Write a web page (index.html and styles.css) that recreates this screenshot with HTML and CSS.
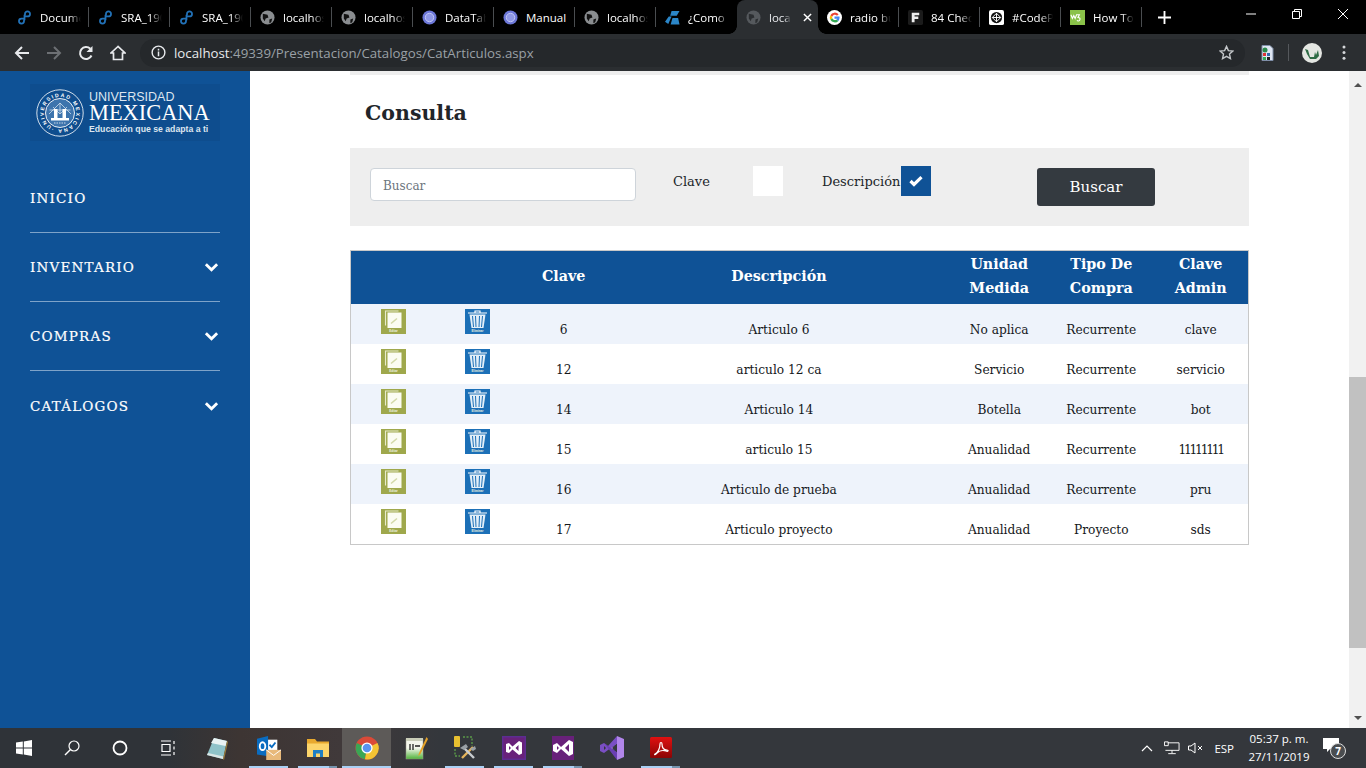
FILE: index.html
```html
<!DOCTYPE html>
<html lang="es">
<head>
<meta charset="utf-8">
<title>CatArticulos</title>
<link rel="stylesheet" href="styles.css">
</head>
<body>
<div class="tabstrip">
  <div class="tab"><svg class="fav"><use href="#f-link"/></svg><span class="tab-t">Document</span></div>
  <div class="tab"><svg class="fav"><use href="#f-link"/></svg><span class="tab-t">SRA_190</span></div>
  <div class="tab"><svg class="fav"><use href="#f-link"/></svg><span class="tab-t">SRA_190</span></div>
  <div class="tab"><svg class="fav"><use href="#f-globe"/></svg><span class="tab-t">localhost</span></div>
  <div class="tab"><svg class="fav"><use href="#f-globe"/></svg><span class="tab-t">localhost</span></div>
  <div class="tab"><svg class="fav"><use href="#f-dt"/></svg><span class="tab-t">DataTables</span></div>
  <div class="tab"><svg class="fav"><use href="#f-dt"/></svg><span class="tab-t wide">Manual</span></div>
  <div class="tab"><svg class="fav"><use href="#f-globe"/></svg><span class="tab-t">localhost</span></div>
  <div class="tab tab-noline"><svg class="fav" viewBox="0 0 16 16"><path d="M7 1h8.500l-3 5H5.500zM0 12.500L4 7h3l-3.500 8zM8 8.500h6l1.500 7H6z" fill="#2b86c8"/></svg><span class="tab-t">¿Como</span></div>
  <div class="tab tab-active"><svg class="fav" viewBox="0 0 16 16"><circle cx="8" cy="8" r="7.500" fill="#55595d"/><path d="M3 4l5 1 1 3-3 1-1 3-2-3zM10 10l3-1-1 4-2 1z" fill="#2b2e31"/></svg><span class="tab-t short">localhost</span><svg class="tab-x" viewBox="0 0 10 10"><path d="M1 1l8 8M9 1l-8 8" stroke="#fff" stroke-width="1.600"/></svg></div>
  <div class="tab"><svg class="fav" viewBox="0 0 16 16"><circle cx="8" cy="8" r="8" fill="#fff"/><path d="M12.400 4.600A5.400 5.400 0 0 0 3.600 5.600l2 1.500A3 3 0 0 1 10.600 6z" fill="#ea4335"/><path d="M3.600 5.600a5.400 5.400 0 0 0 0 4.800l2-1.500a3 3 0 0 1 0-1.800z" fill="#fbbc05"/><path d="M3.600 10.400a5.400 5.400 0 0 0 8.600 1.200l-2-1.500a3 3 0 0 1-4.600-1.200z" fill="#34a853"/><path d="M13.400 8c0-.4 0-.7-.1-1H8v2.200h3a2.600 2.600 0 0 1-.8 1l2 1.400A5.400 5.400 0 0 0 13.400 8z" fill="#4285f4"/></svg><span class="tab-t">radio butt</span></div>
  <div class="tab"><svg class="fav" viewBox="0 0 16 16"><rect width="16" height="16" rx="2" fill="#1b1b1b"/><path d="M4 3h8v2.500H7V7h4v2.500H7V13H4z" fill="#eee"/></svg><span class="tab-t">84 Check</span></div>
  <div class="tab"><svg class="fav" viewBox="0 0 16 16"><rect width="16" height="16" rx="2" fill="#fff"/><circle cx="8" cy="8" r="6" fill="#111"/><path d="M8 3.500L12.500 8 8 12.500 3.500 8zM3.500 8h9M8 3.500v9" fill="none" stroke="#fff" stroke-width="1"/></svg><span class="tab-t">#CodePen</span></div>
  <div class="tab"><svg class="fav" viewBox="0 0 16 16"><rect width="16" height="16" fill="#8ac249"/><path d="M1 5l1.500 4L4 6l1.500 3L7 5h3l-1.500 3c2 0 2.500 1 2 2.500S8 12 7.500 11" fill="none" stroke="#fff" stroke-width="1.200"/></svg><span class="tab-t">How To C</span></div>
  <svg class="newtab" viewBox="0 0 14 14"><path d="M7 0v14M0 7h14" stroke="#fff" stroke-width="2"/></svg>
  <div class="winctl">
    <svg viewBox="0 0 12 12"><path d="M1 6h10" stroke="#fff"/></svg>
    <svg viewBox="0 0 12 12"><path d="M1.500 3.500h7v7h-7zM3.500 3.500v-2h7v7h-2" fill="none" stroke="#fff"/></svg>
    <svg viewBox="0 0 12 12"><path d="M1 1l10 10M11 1L1 11" stroke="#fff"/></svg>
  </div>
</div>

<div class="toolbar">
  <svg class="tb-btn" viewBox="0 0 16 16"><path d="M15 8H2M8 2L2 8l6 6" fill="none" stroke="#e8eaed" stroke-width="2"/></svg>
  <svg class="tb-btn" viewBox="0 0 16 16"><path d="M1 8h13M8 2l6 6-6 6" fill="none" stroke="#6d7074" stroke-width="2"/></svg>
  <svg class="tb-btn" viewBox="0 0 16 16"><path d="M13.500 10.500A6 6 0 1 1 12.300 3.800" fill="none" stroke="#e8eaed" stroke-width="2"/><path d="M14.500 1v6h-6z" fill="#e8eaed"/></svg>
  <svg class="tb-btn" viewBox="0 0 16 16"><path d="M8 1.500L1 8h2.500v6.500h9V8H15z" fill="none" stroke="#e8eaed" stroke-width="1.700"/></svg>
  <div class="omnibox">
    <svg class="info" viewBox="0 0 16 16"><circle cx="8" cy="8" r="6.800" fill="none" stroke="#e8eaed" stroke-width="1.500"/><path d="M8 7v5M8 4v1.800" stroke="#e8eaed" stroke-width="1.600"/></svg>
    <span class="url"><span class="url-host">localhost</span>:49339/Presentacion/Catalogos/CatArticulos.aspx</span>
    <svg class="star" viewBox="0 0 16 16"><path d="M8 1.500l2 4.500 4.800.5-3.600 3.200 1 4.800L8 12.100l-4.200 2.400 1-4.800L1.200 6.500 6 6z" fill="none" stroke="#c4c7ca" stroke-width="1.500"/></svg>
  </div>
  <svg class="ext" viewBox="0 0 16 16"><path d="M3 .5h8l3 3v12H3z" fill="#dfe6f2" stroke="#7f8ea8"/><rect x="4" y="8" width="3" height="3" fill="#d33"/><rect x="8" y="8" width="3" height="3" fill="#36a"/><rect x="4" y="12" width="3" height="3" fill="#3a5"/><rect x="8" y="12" width="3" height="3" fill="#222"/><circle cx="6" cy="5" r="2.500" fill="#2a8a4a"/></svg>
  <span class="tb-sep"></span>
  <svg class="avatar" viewBox="0 0 20 20"><circle cx="10" cy="10" r="10" fill="#e4e6e2"/><path d="M3 6l3 1 2 7h4l1-5 1 3 2-5 1 6-3 3H8L5 11z" fill="#2e6b45"/></svg>
  <svg class="menu" viewBox="0 0 4 16"><circle cx="2" cy="2" r="1.600" fill="#d5d7da"/><circle cx="2" cy="8" r="1.600" fill="#d5d7da"/><circle cx="2" cy="14" r="1.600" fill="#d5d7da"/></svg>
</div>

<div class="page">
  <aside class="sidebar">
    <div class="logo">
      <svg class="seal" viewBox="0 0 48 48">
        <circle cx="24" cy="24" r="23.200" fill="none" stroke="#e8eef5" stroke-width=".9"/>
        <circle cx="24" cy="24" r="14.500" fill="#3d74ad" stroke="#fff" stroke-width=".9"/>
        <defs><path id="ring" d="M7.800 24a16.200 16.200 0 1 1 32.400 0a16.200 16.200 0 1 1-32.400 0"/></defs>
        <text class="seal-t" transform="rotate(-58 24 24)"><textPath href="#ring" textLength="100" lengthAdjust="spacing">UNIVERSIDAD MEXICANA ·</textPath></text>
        <path d="M13 25L24 14l11 11M17 18l7 7 7-7M24 14v11M13.500 21H34.500" fill="none" stroke="#cfdeee" stroke-width=".8"/>
        <path d="M18 20h3.500v9H18zM26.500 20H30v9h-3.500zM15 29h18v2.500H15z" fill="#fff"/>
        <path d="M18 34h12" stroke="#dbe6f1" stroke-width=".9" stroke-dasharray="1.500 1"/>
      </svg>
      <div class="logo-text">
        <span class="logo-a">UNIVERSIDAD</span>
        <span class="logo-b">MEXICANA</span>
        <span class="logo-c">Educación que se adapta a ti</span>
      </div>
    </div>
    <nav class="nav">
      <a class="nav-item">INICIO</a>
      <a class="nav-item">INVENTARIO<svg class="chev" viewBox="0 0 16 10"><path d="M2 2l6 6 6-6" fill="none" stroke="#fff" stroke-width="3"/></svg></a>
      <a class="nav-item">COMPRAS<svg class="chev" viewBox="0 0 16 10"><path d="M2 2l6 6 6-6" fill="none" stroke="#fff" stroke-width="3"/></svg></a>
      <a class="nav-item last">CATÁLOGOS<svg class="chev" viewBox="0 0 16 10"><path d="M2 2l6 6 6-6" fill="none" stroke="#fff" stroke-width="3"/></svg></a>
    </nav>
  </aside>

  <main class="main">
    <div class="strip"></div>
    <h1 class="title">Consulta</h1>
    <form class="search">
      <input class="search-input" type="text" placeholder="Buscar">
      <span class="lbl lbl-clave">Clave</span>
      <span class="box"></span>
      <span class="lbl lbl-desc">Descripción</span>
      <span class="box box-on"><svg viewBox="0 0 14 12"><path d="M1.500 6l3.500 3.500L12.500 2.200" fill="none" stroke="#fff" stroke-width="3.200"/></svg></span>
      <button class="btn" type="button">Buscar</button>
    </form>

    <table class="grid">
      <colgroup><col class="c1"><col class="c1"><col class="c3"><col class="c4"><col class="c5"><col class="c6"><col class="c7"></colgroup>
      <thead>
        <tr><th></th><th></th><th>Clave</th><th>Descripción</th><th>Unidad Medida</th><th>Tipo De Compra</th><th>Clave Admin</th></tr>
      </thead>
      <tbody>
        <tr><td class="ic"><svg class="ico"><use href="#edit"/></svg></td><td class="ic"><svg class="ico"><use href="#del"/></svg></td><td>6</td><td>Articulo 6</td><td>No aplica</td><td>Recurrente</td><td>clave</td></tr>
        <tr><td class="ic"><svg class="ico"><use href="#edit"/></svg></td><td class="ic"><svg class="ico"><use href="#del"/></svg></td><td>12</td><td>articulo 12 ca</td><td>Servicio</td><td>Recurrente</td><td>servicio</td></tr>
        <tr><td class="ic"><svg class="ico"><use href="#edit"/></svg></td><td class="ic"><svg class="ico"><use href="#del"/></svg></td><td>14</td><td>Articulo 14</td><td>Botella</td><td>Recurrente</td><td>bot</td></tr>
        <tr><td class="ic"><svg class="ico"><use href="#edit"/></svg></td><td class="ic"><svg class="ico"><use href="#del"/></svg></td><td>15</td><td>articulo 15</td><td>Anualidad</td><td>Recurrente</td><td class="ones">11111111</td></tr>
        <tr><td class="ic"><svg class="ico"><use href="#edit"/></svg></td><td class="ic"><svg class="ico"><use href="#del"/></svg></td><td>16</td><td>Articulo de prueba</td><td>Anualidad</td><td>Recurrente</td><td>pru</td></tr>
        <tr class="row-last"><td class="ic"><svg class="ico"><use href="#edit"/></svg></td><td class="ic"><svg class="ico"><use href="#del"/></svg></td><td>17</td><td>Articulo proyecto</td><td>Anualidad</td><td>Proyecto</td><td>sds</td></tr>
      </tbody>
    </table>
  </main>

  <div class="scrollbar">
    <span class="arrow-up"></span>
    <div class="track"><div class="thumb"></div></div>
    <span class="arrow-down"></span>
  </div>
</div>

<div class="taskbar">
  <svg class="tk" viewBox="0 0 16 16"><path d="M0 2.500L6.800 1.500v6H0zM7.800 1.400L16 0v7.500H7.800zM0 8.500h6.800v6L0 13.500zM7.800 8.500H16V16l-8.200-1.400z" fill="#fff"/></svg>
  <svg class="tk" viewBox="0 0 16 16"><circle cx="10" cy="6" r="5" fill="none" stroke="#fff" stroke-width="1.200"/><path d="M6.500 9.500L1 15" stroke="#fff" stroke-width="1.400"/></svg>
  <svg class="tk" viewBox="0 0 16 16"><circle cx="8" cy="8" r="6.500" fill="none" stroke="#fff" stroke-width="1.800"/></svg>
  <svg class="tk" viewBox="0 0 16 16"><path d="M1 1h10M1 15h10M2 4.500h8v7H2zM14 1v3M14 6.500v3M14 12v3" fill="none" stroke="#fff" stroke-width="1.200"/></svg>
  <svg class="tk app app-first" viewBox="0 0 24 24"><path d="M9 2l13 3-4 18L2 19z" fill="#8fc3c9"/><path d="M9 2l13 3-1.500 5L6 7z" fill="#e9f3f3"/><path d="M2 19l16 4 .6-2.500L3 17z" fill="#dbe6e6"/><path d="M22 5l1 1-4 18-1-1z" fill="#9a7a3a"/></svg>
  <div class="tkw on"><svg class="tk" viewBox="0 0 26 26"><rect x="9" y="4" width="13" height="12" fill="#fff"/><path d="M13.500 9.500l2.500 2.500 4-5" fill="none" stroke="#0a6cc0" stroke-width="2"/><path d="M0 3l12-3v22L0 20z" fill="#0a6cc0"/><ellipse cx="6" cy="11" rx="3" ry="4.200" fill="none" stroke="#fff" stroke-width="2"/><rect x="10" y="15" width="16" height="11" fill="#e8b97a"/><path d="M10 15l8 6 8-6" fill="none" stroke="#fff"/></svg></div>
  <div class="tkw on split"><svg class="tk" viewBox="0 0 24 24"><path d="M1 3h8l2 2.500h12V21H1z" fill="#e8a92e"/><path d="M1 7.500h22V21H1z" fill="#fcd56b"/><path d="M7 21v-7h10v7h-3v-3.500h-4V21z" fill="#1f7fc4"/></svg></div>
  <div class="tkw active"><svg class="tk" viewBox="0 0 24 24"><circle cx="12" cy="12" r="11.500" fill="#da4a38"/><path d="M12 12L1.800 7A11.500 11.500 0 0 0 10 23.300z" fill="#3aa655"/><path d="M12 12l-2 11.300A11.500 11.500 0 0 0 22.500 7z" fill="#f3c433"/><circle cx="12" cy="12" r="5.600" fill="#fff"/><circle cx="12" cy="12" r="4.300" fill="#5a94ef"/></svg></div>
  <svg class="tk app" viewBox="0 0 24 24"><defs><linearGradient id="note" x1="0" y1="0" x2="0" y2="1"><stop offset=".45" stop-color="#f4f6ec"/><stop offset="1" stop-color="#4fb33a"/></linearGradient></defs><rect x="2" y="3" width="17" height="20" fill="url(#note)" stroke="#9a9a8a" stroke-width=".5"/><path d="M2 2h17v3H2z" fill="#c9cdb8"/><path d="M6 8v6M9 8v6M11 10h5" stroke="#222" stroke-width="1.300"/><path d="M22.500 1L15 17l-1 3 2.500-2L24 3z" fill="#e5a228"/></svg>
  <div class="tkw on"><svg class="tk" viewBox="0 0 24 24"><rect x="1" y="0" width="6" height="11" rx="1" fill="#e8c030"/><path d="M10 1h9v9M2 13v7h5" fill="none" stroke="#5a9a48" stroke-width="1.400" stroke-dasharray="2 1.500"/><path d="M9 22L20 11" stroke="#e5b35a" stroke-width="2.400"/><path d="M10 11l11 11" stroke="#c8ccd0" stroke-width="2.400"/><path d="M7 12l6-4 2 3-4 3zM17 13l5-3 1 3-3 2z" fill="#9aa0a6"/></svg></div>
  <div class="tkw on"><svg class="tk" viewBox="0 0 24 24"><rect width="24" height="24" fill="#5c2d91"/><rect x="1.500" y="1.500" width="21" height="21" fill="#68217a"/><path d="M4 8l3-1 3.500 3.500L17 5l3 1.500v11L17 19l-6.500-5.500L7 17l-3-1zM7 10v4l2-2zM16.500 9l-3 3 3 3z" fill="#fff" fill-rule="evenodd"/></svg></div>
  <div class="tkw on split"><svg class="tk" viewBox="0 0 24 24"><rect x="1" y="0" width="22" height="24" fill="#68217a"/><path d="M2 9l4-2 4 4 8-7 4 2v12l-4 2-8-7-4 4-4-2zM6 10v4l2-2zM18 8l-4 4 4 4z" fill="#fff" fill-rule="evenodd"/></svg></div>
  <svg class="tk app" viewBox="0 0 24 24"><path d="M17 0l7 3v18l-7 3V14L7 12 17 10z" fill="#b186ea"/><path d="M17 0v8l-9 6-4 3-4-2V9l4-2 4 3z" fill="#7a4fc4"/><path d="M17 24v-8l-9-6-4-3 13 17z" fill="#6a3fb4"/><path d="M4 10v4l2-2z" fill="#34373c"/><path d="M17 8v8l-5-4z" fill="#34373c"/></svg>
  <div class="tkw on split"><svg class="tk" viewBox="0 0 24 24"><defs><linearGradient id="pdf" x1="0" y1="0" x2="0" y2="1"><stop offset="0" stop-color="#e01010"/><stop offset="1" stop-color="#8a0505"/></linearGradient></defs><rect x="1" y="1" width="22" height="21" rx="1.500" fill="url(#pdf)"/><path d="M6 18c3-1 5-6 5-10 0-2 2-2 2 0 0 4 2 6 5 6 2 0 1 2-1 1-3-1-7 0-9 2-2 2-3 2-2 1z" fill="none" stroke="#fff" stroke-width="1.200"/></svg></div>
  <div class="tray">
    <svg class="tr-chev" viewBox="0 0 12 7"><path d="M1 6l5-5 5 5" fill="none" stroke="#fff" stroke-width="1.200"/></svg>
    <svg class="tr-net" viewBox="0 0 17 14"><path d="M4 1.500h12v8H1.500M8.500 9.500v3M4.500 13h8M.5.500h4v4h-4z" fill="none" stroke="#fff"/></svg>
    <svg class="tr-vol" viewBox="0 0 15 12"><path d="M.5 4v4h2.500L7 11V1L3 4zM10 4l4 4M14 4l-4 4" fill="none" stroke="#fff"/></svg>
    <span class="tr-lang">ESP</span>
    <span class="tr-clock"><span>05:37 p. m.</span><span>27/11/2019</span></span>
    <span class="tr-notif"><svg viewBox="0 0 16 14"><path d="M0 0h16v11H7l-3 3v-3H0z" fill="#fff"/></svg><span class="badge">7</span></span>
  </div>
</div>

<svg class="defs" aria-hidden="true">
  <symbol id="f-link" viewBox="0 0 16 16">
    <path d="M8.500 5.500V4.200a2.700 2.700 0 1 1 2.700 2.700H7.500M7.500 10.500v1.300a2.700 2.700 0 1 1-2.700-2.700H8.500M8 5v6" fill="none" stroke="#2272b8" stroke-width="1.900"/>
  </symbol>
  <symbol id="f-globe" viewBox="0 0 16 16">
    <circle cx="8" cy="8" r="7.500" fill="#8a8d90"/><path d="M3 4l5 1 1 3-3 1-1 3-2-3zM10 10l3-1-1 4-2 1z" fill="#111"/>
  </symbol>
  <symbol id="f-dt" viewBox="0 0 16 16">
    <circle cx="8" cy="8" r="7.500" fill="#6d78d8"/><circle cx="8" cy="8" r="4.500" fill="#8f98e6" stroke="#c5caf4"/>
  </symbol>
  <symbol id="edit" viewBox="0 0 25 25">
    <rect width="25" height="25" fill="#9fa84c"/>
    <path d="M4.500 16.500V2h13" fill="none" stroke="#e7ebc9" stroke-width="1.100"/>
    <rect x="6.500" y="3.500" width="14" height="15.500" fill="#fbfcf2"/>
    <path d="M10 14.500l6-5" stroke="#d3d9a8" stroke-width="1.600"/>
    <text class="mini" x="12.500" y="23">Editar</text>
  </symbol>
  <symbol id="del" viewBox="0 0 25 25">
    <rect width="25" height="25" fill="#1c70b7"/>
    <path d="M3 4h19M10 3.500V2h5v1.500" fill="none" stroke="#fff" stroke-width="1.200"/>
    <path d="M4.500 5.500h16L18.500 19h-12z" fill="#e3eff8"/>
    <path d="M7.500 7l1 11M10.500 7l.5 11M14.500 7l-.5 11M17.500 7l-1 11" stroke="#1c70b7" stroke-width="1"/>
    <text class="mini" x="12.500" y="23">Eliminar</text>
  </symbol>
</svg>
</body>
</html>
```

FILE: styles.css
```css
* { box-sizing: border-box; }
html, body { margin: 0; height: 100%; overflow: hidden; }
body {
  display: flex;
  flex-direction: column;
  width: 1366px;
  height: 768px;
  background: #fff;
  font-family: "DejaVu Serif", serif;
}
.defs { width: 0; height: 0; display: block; overflow: hidden; flex: none; }

/* tab strip */
.tabstrip {
  flex: none;
  height: 34px;
  background: #000;
  display: flex;
  align-items: stretch;
  padding-left: 8px;
  font-family: "Open Sans", sans-serif;
  font-size: 11.500px;
  color: #fff;
}
.tab {
  width: 81px;
  display: flex;
  align-items: center;
  gap: 8px;
  padding-left: 9px;
  position: relative;
}
.tab::after {
  content: "";
  position: absolute;
  right: 0;
  top: 7px;
  height: 20px;
  width: 1px;
  background: #4a4d50;
}
.tab-noline::after { display: none; }
.fav { width: 15px; height: 15px; flex: none; }
.tab-t {
  width: 41px;
  overflow: hidden;
  white-space: nowrap;
  -webkit-mask-image: linear-gradient(to right, #000 70%, transparent 100%);
  mask-image: linear-gradient(to right, #000 70%, transparent 100%);
}
.tab-t.wide { width: 46px; -webkit-mask-image: none; mask-image: none; }
.tab-t.short { width: 22px; }
.tab-active {
  background: #2b2e31;
  border-radius: 8px 8px 0 0;
  color: #e8eaed;
}
.tab-active::before,
.tab-active::after {
  content: "";
  display: block;
  position: absolute;
  top: auto;
  bottom: 0;
  width: 8px;
  height: 8px;
}
.tab-active::before { left: -8px; right: auto; background: radial-gradient(circle at 0 0, #000 7.500px, #2b2e31 8px); }
.tab-active::after { right: -8px; background: radial-gradient(circle at 100% 0, #000 7.500px, #2b2e31 8px); }
.tab-x { width: 9px; height: 9px; flex: none; margin-left: 4px; }
.newtab { width: 13px; height: 13px; margin: 11px 0 0 16px; }
.winctl {
  margin-left: auto;
  display: flex;
  gap: 34px;
  padding: 8px 17px 0 0;
}
.winctl svg { width: 12px; height: 12px; }

/* toolbar */
.toolbar {
  flex: none;
  height: 37px;
  background: #2b2e31;
  display: flex;
  align-items: center;
  padding-left: 14px;
}
.tb-btn { width: 16px; height: 16px; margin-right: 16px; flex: none; }
.omnibox {
  width: 1105px;
  height: 28px;
  margin-left: -2px;
  border-radius: 14px;
  background: #25282b;
  display: flex;
  align-items: center;
  padding: 0 11px;
  font-family: "Open Sans", sans-serif;
  font-size: 13.270px;
  color: #9aa0a6;
}
.info { width: 15px; height: 15px; flex: none; margin-right: 8px; }
.url { white-space: nowrap; }
.url-host { color: #e8eaed; }
.star { width: 15px; height: 15px; margin-left: auto; }
.ext { width: 16px; height: 16px; margin-left: 14px; flex: none; }
.tb-sep { width: 1px; height: 17px; background: #55585c; margin-left: 13px; }
.avatar { width: 20px; height: 20px; margin-left: 13px; flex: none; }
.menu { width: 4px; height: 15px; margin-left: 20px; flex: none; }

/* page */
.page { flex: 1; display: flex; min-height: 0; }
.sidebar {
  width: 250px;
  flex: none;
  background: #0f5296;
  padding: 13px 30px 0;
}
.logo {
  height: 57px;
  background: #0e4d8e;
  display: flex;
  align-items: center;
  gap: 5px;
  padding-left: 6px;
  color: #fff;
  font-family: "Liberation Sans", sans-serif;
}
.seal { width: 48px; height: 48px; flex: none; }
.seal-t { font-size: 5.200px; fill: #fff; font-family: "Liberation Sans", sans-serif; font-weight: 700; }
.logo-text { display: flex; flex-direction: column; padding-top: 2px; }
.logo-a { font-size: 12.500px; line-height: 13px; color: #dde6f0; }
.logo-b { font-family: "Liberation Serif", serif; font-size: 22.400px; line-height: 17px; }
.logo-c { font-size: 8.700px; line-height: 13px; margin-top: 2px; font-weight: 700; color: #dde6f0; white-space: nowrap; }
.nav { margin-top: 23px; }
.nav-item {
  height: 69px;
  display: flex;
  align-items: center;
  justify-content: space-between;
  border-bottom: 1px solid #7ea3c9;
  color: #fff;
  font-size: 13.500px;
  font-weight: 400;
  letter-spacing: 1.200px;
  -webkit-text-stroke: .2px #fff;
  padding-right: 1px;
}
.nav-item.last { border-bottom: 0; }
.chev { width: 15px; height: 10px; }

.main { flex: 1; min-width: 0; padding: 0 100px; }
.strip { height: 4px; background: #eee; }
.title {
  margin: 24px 0 0 15px;
  font-size: 20.500px;
  line-height: 28px;
  font-weight: 700;
  color: #212529;
}
.search {
  margin-top: 21px;
  height: 78px;
  background: #eee;
  display: flex;
  align-items: flex-start;
  padding: 18px 0 0 20px;
  font-size: 13px;
  color: #212529;
}
.search-input {
  width: 266px;
  height: 33px;
  border: 1px solid #ced4da;
  border-radius: 4px;
  background: #fff;
  padding: 2px 12px 0;
  margin-top: 2px;
  font: 12px "DejaVu Serif", serif;
}
.search-input::placeholder { color: #6c757d; opacity: 1; }
.lbl { line-height: 32px; white-space: nowrap; }
.lbl-clave { width: 80px; margin-left: 37px; }
.lbl-desc { width: 79px; margin-left: 39px; }
.box { width: 30px; height: 30px; background: #fff; display: flex; align-items: center; justify-content: center; }
.box-on { background: #0f5296; }
.box-on svg { width: 14px; height: 12px; }
.btn {
  width: 118px;
  height: 38px;
  margin: 2px 0 0 106px;
  background: #343a40;
  color: #fff;
  border: 0;
  border-radius: 3px;
  font: 15px "DejaVu Serif", serif;
}

.grid {
  margin-top: 24px;
  width: 899px;
  border-collapse: collapse;
  table-layout: fixed;
  border: 1px solid #c8c8c8;
  font-size: 12.200px;
  color: #15181b;
  text-align: center;
}
.c1 { width: 84px; }
.c3 { width: 90px; }
.c4 { width: 340px; }
.c5 { width: 100px; }
.c6 { width: 104px; }
.c7 { width: 95px; }
.grid th {
  height: 53px;
  padding: 0 0 3px;
  background: #0f5296;
  color: #fff;
  font-size: 14.300px;
  line-height: 24px;
  font-weight: 700;
}
.grid td {
  height: 40px;
  padding: 0 0 6px;
  vertical-align: bottom;
  line-height: 16px;
}
.grid tbody tr:nth-child(odd) td { background: #eef3fb; }
.grid .row-last td { height: 41px; padding-bottom: 6px; }
.grid td.ones { letter-spacing: -2.200px; }
.grid td.ic { padding: 5px 0 0 2px; vertical-align: top; line-height: 0; }
.ico { width: 25px; height: 25px; display: inline-block; }
.mini { font: 700 3px "Liberation Sans", sans-serif; fill: #eef2e0; text-anchor: middle; }

.scrollbar {
  width: 17px;
  flex: none;
  background: #f1f1f1;
  display: flex;
  flex-direction: column;
  align-items: center;
}
.arrow-up, .arrow-down { height: 17px; flex: none; width: 0; border-left: 4px solid transparent; border-right: 4px solid transparent; }
.arrow-up { border-bottom: 4px solid #505050; height: 10px; margin: 6px 0 1px; }
.arrow-down { border-top: 4px solid #505050; height: 10px; margin: 1px 0 2px; }
.track { flex: 1; width: 100%; padding-top: 289px; }
.thumb { height: 271px; background: #c1c1c1; }

/* taskbar */
.taskbar {
  flex: none;
  height: 40px;
  background: #2f343a;
  background-image: linear-gradient(to right, #2f3338 0, #2f3338 170px, #3d3533 240px, #40393a 340px, #34373c 440px);
  display: flex;
  align-items: center;
  color: #fff;
  font-family: "Open Sans", sans-serif;
}
.tk { width: 16px; height: 16px; flex: none; margin: 0 16px; }
.tk.app, .tkw .tk { width: 24px; height: 24px; }
.tk.app { margin: 0 12.500px; }
.tk.app-first { margin-right: 15.500px; }
.tkw {
  width: 49px;
  height: 40px;
  display: flex;
  align-items: center;
  justify-content: center;
  flex: none;
  position: relative;
}
.tkw .tk { margin: 0; }
.tkw.on::after {
  content: "";
  position: absolute;
  left: 5px;
  right: 5px;
  bottom: 0;
  height: 2px;
  background: #a9d0f5;
}
.tkw.split::after { background: linear-gradient(to right, #a9d0f5 80%, #7593ad 80%); }
.tkw.active { background: #5d5a58; }
.tkw.active::after {
  content: "";
  position: absolute;
  left: 0;
  right: 0;
  bottom: 0;
  height: 2px;
  background: #a9d0f5;
}
.tray {
  margin-left: auto;
  display: flex;
  align-items: center;
  font-size: 11.500px;
  padding-right: 24px;
}
.tr-chev { width: 12px; height: 7px; }
.tr-net { width: 16px; height: 14px; margin-left: 11px; }
.tr-vol { width: 15px; height: 12px; margin-left: 8px; }
.tr-lang { margin-left: 11px; }
.tr-clock { display: flex; flex-direction: column; align-items: center; line-height: 18px; margin-left: 14px; width: 62px; }
.tr-notif { position: relative; width: 19px; height: 20px; margin-left: 13px; display: block; }
.tr-notif svg { width: 16px; height: 14px; display: block; }
.badge {
  position: absolute;
  left: 7px;
  top: 5px;
  width: 16px;
  height: 16px;
  border-radius: 50%;
  background: #4a4d50;
  border: 1px solid #ddd;
  font-size: 10px;
  font-weight: 700;
  line-height: 14px;
  text-align: center;
}
```
